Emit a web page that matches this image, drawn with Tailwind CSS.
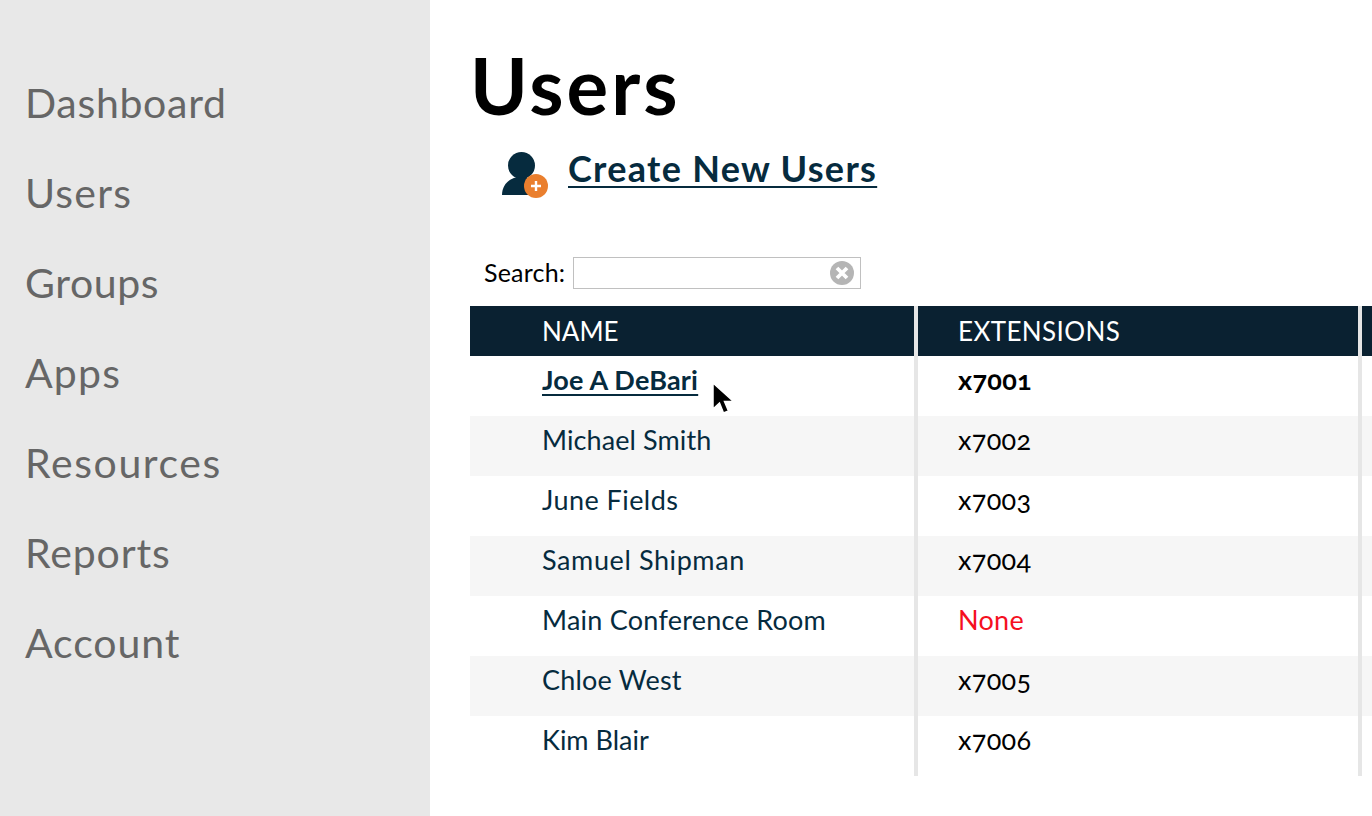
<!DOCTYPE html>
<html>

<head>
    <meta charset="UTF-8">
    <meta name="viewport" content="width=device-width, initial-scale=1.0">
    <script src="https://cdn.jsdelivr.net/npm/@tailwindcss/browser@4"></script>
</head>

<body class="font-['Lato','Open_Sans',sans-serif]">
    <div class="flex h-screen overflow-hidden bg-white">
        <!-- sidebar -->
        <nav class="w-[430px] shrink-0 bg-[#e8e8e8] pt-[58px] pl-[25px] text-[41px] leading-[90px] text-[#666666]">
            <a class="block tracking-[.7px]" href="#">Dashboard</a>
            <a class="block tracking-[1.200px]" href="#">Users</a>
            <a class="block tracking-[.6px]" href="#">Groups</a>
            <a class="block tracking-[1.200px]" href="#">Apps</a>
            <a class="block tracking-[1.600px]" href="#">Resources</a>
            <a class="block tracking-[.85px]" href="#">Reports</a>
            <a class="block tracking-[.9px]" href="#">Account</a>
        </nav>

        <div class="relative min-w-0 flex-1 overflow-hidden pl-10">
            <h1 class="pt-[41px] text-[78px] leading-[88px] font-bold tracking-[3px] text-black">Users</h1>

            <div class="mt-[16px] flex h-[50px] items-start pl-[31px]">
                <svg class="mt-[7px] h-[46px] w-[48px]" viewBox="0 0 48 46">
                    <circle cx="20.500" cy="13.500" r="13.500" fill="#062b3e" />
                    <path d="M1 43 C1 32 9 25 20 25 C30 25 38 32 38 43 Z" fill="#062b3e" />
                    <circle cx="35" cy="34" r="12" fill="#ea7f2e" />
                    <path d="M35 29v10M30 34h10" stroke="#fff" stroke-width="2.400" />
                </svg>
                <a class="mt-px ml-[19px] text-[36px] leading-[44px] font-bold tracking-[1.300px] text-[#062b3e] underline decoration-2 underline-offset-4" href="#">Create New Users</a>
            </div>

            <div class="mt-[62px] flex h-8 items-center pl-[14px] text-[25px] tracking-[.2px] text-black">
                <label>Search:</label>
                <div class="ml-[8px] flex h-8 w-[288px] items-center justify-end border border-[#c0c0c0] pr-[6px]">
                    <svg class="h-6 w-6" viewBox="0 0 24 24">
                        <circle cx="12" cy="12" r="12" fill="#b5b5b5" />
                        <path d="M7 7l10 10M17 7l-10 10" stroke="#fff" stroke-width="3.800" />
                    </svg>
                </div>
            </div>

            <table class="mt-[17px] w-[1100px] table-fixed border-separate border-spacing-0 text-[27px] text-black oldstyle-nums">
                <colgroup>
                    <col class="w-[448px]">
                    <col class="w-[444px]">
                    <col>
                </colgroup>
                <thead class="bg-[#0a2131] text-[26px] text-white">
                    <tr class="h-[50px] text-left">
                        <th class="border-r-4 border-[#e6e6e6] pl-[72px] font-normal">NAME</th>
                        <th class="border-r-4 border-[#e6e6e6] pl-10 font-normal tracking-[.4px]">EXTENSIONS</th>
                        <th></th>
                    </tr>
                </thead>
                <tbody>
                    <tr class="h-[60px] font-bold">
                        <td class="border-r-4 border-[#e6e6e6] pb-[12px] pl-[72px] tracking-[.2px] text-[#062b3e]"><a class="underline decoration-2 underline-offset-4" href="#">Joe A DeBari</a></td>
                        <td class="border-r-4 border-[#e6e6e6] pb-[12px] pl-10 tracking-[.3px]">x7001</td>
                        <td></td>
                    </tr>
                    <tr class="h-[60px] bg-[#f6f6f6]">
                        <td class="border-r-4 border-[#e6e6e6] pb-[11px] pl-[72px] tracking-[.1px] text-[#062b3e]">Michael Smith</td>
                        <td class="border-r-4 border-[#e6e6e6] pb-[12px] pl-10 tracking-[.3px]">x7002</td>
                        <td></td>
                    </tr>
                    <tr class="h-[60px]">
                        <td class="border-r-4 border-[#e6e6e6] pb-[11px] pl-[72px] tracking-[.45px] text-[#062b3e]">June Fields</td>
                        <td class="border-r-4 border-[#e6e6e6] pb-[12px] pl-10 tracking-[.3px]">x7003</td>
                        <td></td>
                    </tr>
                    <tr class="h-[60px] bg-[#f6f6f6]">
                        <td class="border-r-4 border-[#e6e6e6] pb-[11px] pl-[72px] tracking-[.6px] text-[#062b3e]">Samuel Shipman</td>
                        <td class="border-r-4 border-[#e6e6e6] pb-[12px] pl-10 tracking-[.3px]">x7004</td>
                        <td></td>
                    </tr>
                    <tr class="h-[60px]">
                        <td class="border-r-4 border-[#e6e6e6] pb-[11px] pl-[72px] tracking-[.25px] text-[#062b3e]">Main Conference Room</td>
                        <td class="border-r-4 border-[#e6e6e6] pb-[12px] pl-10 tracking-[.3px] text-[#f5101f]">None</td>
                        <td></td>
                    </tr>
                    <tr class="h-[60px] bg-[#f6f6f6]">
                        <td class="border-r-4 border-[#e6e6e6] pb-[11px] pl-[72px] tracking-[.2px] text-[#062b3e]">Chloe West</td>
                        <td class="border-r-4 border-[#e6e6e6] pb-[12px] pl-10 tracking-[.3px]">x7005</td>
                        <td></td>
                    </tr>
                    <tr class="h-[60px]">
                        <td class="border-r-4 border-[#e6e6e6] pb-[11px] pl-[72px] text-[#062b3e]">Kim Blair</td>
                        <td class="border-r-4 border-[#e6e6e6] pb-[12px] pl-10 tracking-[.3px]">x7006</td>
                        <td></td>
                    </tr>
                </tbody>
            </table>

            <!-- mouse pointer over the first row -->
            <svg class="absolute top-[380px] left-[280px] h-[38px] w-[26px]" viewBox="0 0 26 38">
                <path d="M3 3v26l6.500-6 4 10 5-2-4-9.500h9z" fill="#000" stroke="#fff" stroke-width="1.500" />
            </svg>
        </div>
    </div>
</body>

</html>
